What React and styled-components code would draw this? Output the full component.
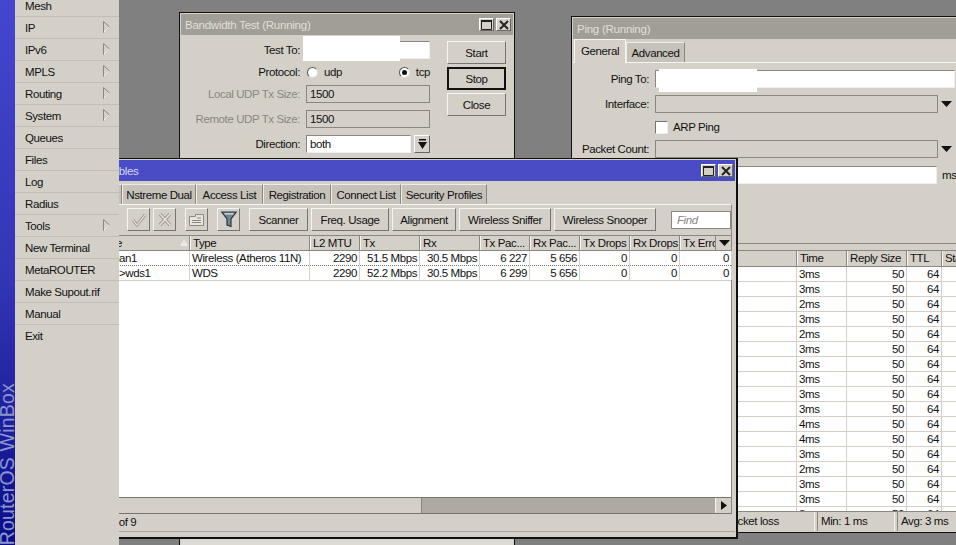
import React from 'react';
import styled, { createGlobalStyle } from 'styled-components';

const MENU = [
  ['Mesh'], ['IP', 1], ['IPv6', 1], ['MPLS', 1], ['Routing', 1], ['System', 1], ['Queues'], ['Files'], ['Log'], ['Radius'],
  ['Tools', 1], ['New Terminal'], ['MetaROUTER'], ['Make Supout.rif'], ['Manual'], ['Exit'],
];
const TIMES = ['3ms', '3ms', '2ms', '3ms', '2ms', '3ms', '3ms', '3ms', '3ms', '3ms', '4ms', '4ms', '3ms', '2ms', '3ms', '3ms', '3ms'];
const WIRELESS_COLS = '127px 120px 50px 60px 60px 50px 50px 50px 50px 36px 16px';
const WIRELESS_ROW_COLS = '127px 120px 50px 60px 60px 50px 50px 50px 50px 52px';
const PING_COLS = '224px 50px 60px 35px 1fr';

const CheckIcon = () => (
  <svg width="16" height="14" viewBox="0 0 16 14" fill="none" strokeLinejoin="miter">
    <path d="M2 7l4 5 8-10" stroke="#a09c94" strokeWidth="3" />
    <path d="M2 7l4 5 8-10" stroke="#e6e3dc" strokeWidth="1.2" />
  </svg>
);
const CrossIcon = () => (
  <svg width="14" height="15" viewBox="0 0 14 15" fill="none">
    <path d="M2 2l10 11M12 2L2 13" stroke="#a09c94" strokeWidth="3.4" />
    <path d="M2 2l10 11M12 2L2 13" stroke="#e6e3dc" strokeWidth="1.4" />
  </svg>
);
const NoteIcon = () => (
  <svg width="15" height="12" viewBox="0 0 15 12" fill="#e8e5de" stroke="#8c8880">
    <path d="M.5 4V2.500h6v-2h8v11H.5z" />
    <path d="M8 4h4M3 6.500h9M3 8.500h9" />
  </svg>
);
const FilterIcon = () => (
  <svg width="16" height="17" viewBox="0 0 16 17">
    <path d="M.8 1h14.400L10 8v7.500L6 14V8z" fill="#6d8794" stroke="#2a363e" strokeWidth="1.2" />
    <path d="M3.500 2.800h9" stroke="#cfdae0" strokeWidth="1.400" />
  </svg>
);
const MaxIcon = () => (
  <svg width="11" height="10" viewBox="0 0 11 10" fill="none" stroke="#222">
    <path d="M.5 1h10v8.500H.5z" />
    <path d="M0 1h11" strokeWidth="2" />
  </svg>
);
const CloseIcon = () => (
  <svg width="10" height="10" viewBox="0 0 10 10" fill="none" stroke="#222" strokeWidth="2">
    <path d="M1 1l8 8M9 1L1 9" />
  </svg>
);
const DownArrow = () => (
  <svg width="11" height="6" viewBox="0 0 11 6" fill="#111">
    <path d="M0 0h11L5.500 6z" />
  </svg>
);
const StopDownArrow = () => (
  <svg width="9" height="10" viewBox="0 0 9 10" fill="#111">
    <path d="M1 0h7v1.500H1zM0 3h9L4.500 10z" />
  </svg>
);
const RightArrow = () => (
  <svg width="6" height="9" viewBox="0 0 6 9" fill="#111">
    <path d="M0 0l6 4.500L0 9z" />
  </svg>
);
const Chevron = () => (
  <ChevronSvg width="7" height="12" viewBox="0 0 7 12" fill="#d4d0c8">
    <path d="M.5.500v11L6.500 6z" stroke="#8a8780" />
    <path d="M1 11l5.500-5" stroke="#fff" fill="none" />
  </ChevronSvg>
);

const WindowButtons = () => (
  <TitleButtons>
    <TitleButton><MaxIcon /></TitleButton>
    <TitleButton><CloseIcon /></TitleButton>
  </TitleButtons>
);

const App = () => (
  <Page>
    <GlobalStyle />
    <Strip>
      <StripText>RouterOS WinBox</StripText>
    </Strip>
    <Menu>
      {MENU.map(([name, sub]) => (
        <MenuItem key={name}>
          {name}
          {sub && <Chevron />}
        </MenuItem>
      ))}
    </Menu>

    <Desktop>
      <Window $x={60} $y={12} $w={336} $h={560}>
        <Title>
          Bandwidth Test (Running)
          <WindowButtons />
        </Title>
        <TestBody>
          <TestForm>
            <FormRow $label={119} $top={0}>
              <Label>Test To:</Label>
              <Field $w={124} $white />
              <Redaction $left={122} $top={-5} $w={97} $h={25} />
            </FormRow>
            <FormRow $label={119} $top={4}>
              <Label>Protocol:</Label>
              <RadioGroup>
                <RadioItem><Radio />udp</RadioItem>
                <RadioItem><Radio $on />tcp</RadioItem>
              </RadioGroup>
            </FormRow>
            <FormRow $label={119} $top={4}>
              <Label $off>Local UDP Tx Size:</Label>
              <Field $w={124}>1500</Field>
            </FormRow>
            <FormRow $label={119} $top={7}>
              <Label $off>Remote UDP Tx Size:</Label>
              <Field $w={124}>1500</Field>
            </FormRow>
            <FormRow $label={119} $top={7}>
              <Label>Direction:</Label>
              <Field $w={105} $white>both</Field>
              <SmallButton><StopDownArrow /></SmallButton>
            </FormRow>
          </TestForm>
          <SideButtons>
            <Button $w={59} $h={23}>Start</Button>
            <Button $w={59} $h={23} $focus>Stop</Button>
            <Button $w={59} $h={23}>Close</Button>
          </SideButtons>
        </TestBody>
        <BottomField />
      </Window>

      <Window $x={452} $y={16} $w={420} $h={517}>
        <Title>Ping (Running)</Title>
        <PingTabs>
          <ActiveTab>General</ActiveTab>
          <Tab $w={59} $h={20}>Advanced</Tab>
        </PingTabs>
        <PingPanel>
          <FormRow $label={70} $top={0}>
            <Label>Ping To:</Label>
            <Field $w={300} $white />
            <Redaction $left={80} $top={-1} $w={98} $h={23} />
          </FormRow>
          <FormRow $label={70} $top={7}>
            <Label>Interface:</Label>
            <Field $w={283} />
            <ArrowSlot><DownArrow /></ArrowSlot>
          </FormRow>
          <FormRow $label={70} $top={5}>
            <Label />
            <CheckBox />
            <CheckText>ARP Ping</CheckText>
          </FormRow>
          <FormRow $label={70} $top={4}>
            <Label>Packet Count:</Label>
            <Field $w={283} />
            <ArrowSlot><DownArrow /></ArrowSlot>
          </FormRow>
          <FormRow $label={70} $top={8}>
            <Label>Timeout:</Label>
            <Field $w={282} $white />
            <Unit>ms</Unit>
          </FormRow>
        </PingPanel>
        <PingTable>
          <HeadRow $cols={PING_COLS} $h={17}>
            <HeadCell>Host</HeadCell>
            <HeadCell>Time</HeadCell>
            <HeadCell>Reply Size</HeadCell>
            <HeadCell>TTL</HeadCell>
            <HeadCell>Status</HeadCell>
          </HeadRow>
          <PingRows>
            {TIMES.map((time, i) => (
              <PingRow key={i} $cols={PING_COLS}>
                <Cell />
                <Cell>{time}</Cell>
                <Cell $right>50</Cell>
                <Cell $right>64</Cell>
                <Cell />
              </PingRow>
            ))}
          </PingRows>
        </PingTable>
        <PingStatus>
          <StatusCell $w={128}>20 items</StatusCell>
          <StatusCell $w={112}>0% packet loss</StatusCell>
          <StatusCell $w={78}>Min: 1 ms</StatusCell>
          <StatusCell $w={94}>Avg: 3 ms</StatusCell>
        </PingStatus>
      </Window>

      <Window $x={-59} $y={158} $w={678} $h={381} $front>
        <Title $active>
          Wireless Tables
          <WindowButtons />
        </Title>
        <WirelessTabs>
          <Tab $w={60} $h={20}>Interfaces</Tab>
          <Tab $w={74} $h={20}>Nstreme Dual</Tab>
          <Tab $w={67} $h={20}>Access List</Tab>
          <Tab $w={68} $h={20}>Registration</Tab>
          <Tab $w={70} $h={20}>Connect List</Tab>
          <Tab $w={86} $h={20}>Security Profiles</Tab>
        </WirelessTabs>
        <Panel>
          <Toolbar>
            <ToolGroup>
              <IconButton>+</IconButton>
              <IconButton>−</IconButton>
            </ToolGroup>
            <ToolGroup>
              <IconButton><CheckIcon /></IconButton>
              <IconButton><CrossIcon /></IconButton>
            </ToolGroup>
            <IconButton><NoteIcon /></IconButton>
            <IconButton><FilterIcon /></IconButton>
            <ToolGroup>
              <Button $w={59} $h={23}>Scanner</Button>
              <Button $w={78} $h={23}>Freq. Usage</Button>
              <Button $w={64} $h={23}>Alignment</Button>
              <Button $w={92} $h={23}>Wireless Sniffer</Button>
              <Button $w={102} $h={23}>Wireless Snooper</Button>
            </ToolGroup>
            <Find>Find</Find>
          </Toolbar>
          <WirelessTable>
            <HeadRow $cols={WIRELESS_COLS} $h={16}>
              <HeadCell $name>Name<SortMark /></HeadCell>
              <HeadCell>Type</HeadCell>
              <HeadCell>L2 MTU</HeadCell>
              <HeadCell>Tx</HeadCell>
              <HeadCell>Rx</HeadCell>
              <HeadCell>Tx Pac...</HeadCell>
              <HeadCell>Rx Pac...</HeadCell>
              <HeadCell>Tx Drops</HeadCell>
              <HeadCell>Rx Drops</HeadCell>
              <HeadCell>Tx Errors</HeadCell>
              <HeadArrow><DownArrow /></HeadArrow>
            </HeadRow>
            <WirelessRows>
              <WirelessRow $cols={WIRELESS_ROW_COLS}>
                <Cell $indent={46}>wlan1</Cell>
                <Cell>Wireless (Atheros 11N)</Cell>
                <Cell $right>2290</Cell>
                <Cell $right>51.5 Mbps</Cell>
                <Cell $right>30.5 Mbps</Cell>
                <Cell $right>6 227</Cell>
                <Cell $right>5 656</Cell>
                <Cell $right>0</Cell>
                <Cell $right>0</Cell>
                <Cell $right>0</Cell>
              </WirelessRow>
              <WirelessRow $cols={WIRELESS_ROW_COLS}>
                <Cell $indent={56}>&gt;wds1</Cell>
                <Cell>WDS</Cell>
                <Cell $right>2290</Cell>
                <Cell $right>52.2 Mbps</Cell>
                <Cell $right>30.5 Mbps</Cell>
                <Cell $right>6 299</Cell>
                <Cell $right>5 656</Cell>
                <Cell $right>0</Cell>
                <Cell $right>0</Cell>
                <Cell $right>0</Cell>
              </WirelessRow>
            </WirelessRows>
            <Scrollbar>
              <ScrollThumb />
              <ScrollTrack />
              <ScrollEnd><RightArrow /></ScrollEnd>
            </Scrollbar>
          </WirelessTable>
        </Panel>
        <WirelessStatus>2 items out of 9</WirelessStatus>
      </Window>
    </Desktop>
  </Page>
);

export default App;

const GlobalStyle = createGlobalStyle`
  html, body {
    margin: 0;
    padding: 0;
    background: #808080;
  }
  * {
    box-sizing: border-box;
  }
`;
const Page = styled.div`
  width: 956px;
  height: 545px;
  display: flex;
  overflow: hidden;
  font-family: "Liberation Sans", Arial, sans-serif;
  font-size: 11.5px;
  letter-spacing: -0.4px;
  color: #111;
`;
const Strip = styled.div`
  width: 15px;
  flex: none;
  display: flex;
  align-items: flex-end;
  overflow: hidden;
  background: linear-gradient(180deg, #4446cc 0%, #3436b8 50%, #0a0c88 100%);
`;
const StripText = styled.div`
  writing-mode: vertical-rl;
  transform: rotate(180deg);
  font-size: 19.5px;
  line-height: 15px;
  letter-spacing: 0.2px;
  white-space: nowrap;
  color: #8d96cf;
`;
const Menu = styled.div`
  width: 104px;
  flex: none;
  margin-top: -5px;
  background: #d4d0c8;
`;
const MenuItem = styled.div`
  height: 22px;
  display: flex;
  align-items: center;
  justify-content: space-between;
  padding: 0 9px 0 10px;
  border-bottom: 1px solid #c2beb6;

  &:nth-child(n + 16) {
    border-bottom: 0;
  }
`;
const ChevronSvg = styled.svg`
  margin-top: -2px;
`;
const Desktop = styled.div`
  position: relative;
  flex: 1;
  height: 545px;
  overflow: hidden;
  background: #808080;
`;
const Window = styled.div`
  position: absolute;
  left: ${(p) => p.$x}px;
  top: ${(p) => p.$y}px;
  width: ${(p) => p.$w}px;
  height: ${(p) => p.$h}px;
  display: flex;
  flex-direction: column;
  padding: 1px;
  background: #d4d0c8;
  border: 1px solid #111;
  border-right-width: ${(p) => (p.$front ? 2 : 1)}px;
  border-bottom-width: ${(p) => (p.$front ? 2 : 1)}px;
`;
const Title = styled.div`
  height: 21px;
  flex: none;
  display: flex;
  align-items: center;
  justify-content: space-between;
  padding: 0 2px 0 ${(p) => (p.$active ? 2 : 4)}px;
  letter-spacing: ${(p) => (p.$active ? -0.4 : -0.25)}px;
  background: ${(p) => (p.$active ? '#4a4cc6' : '#a19e96')};
  color: ${(p) => (p.$active ? '#d6d6ee' : '#e2dfd8')};
`;
const TitleButtons = styled.div`
  display: flex;
  gap: 2px;
`;
const TitleButton = styled.div`
  width: 15px;
  height: 13px;
  display: flex;
  align-items: center;
  justify-content: center;
  background: #d4d0c8;
  border: 1px solid;
  border-color: #fff #666 #666 #fff;
`;
const TestBody = styled.div`
  display: flex;
  padding-top: 6px;
`;
const TestForm = styled.div`
  width: 249px;
  flex: none;
`;
const FormRow = styled.div`
  position: relative;
  height: 18px;
  margin-top: ${(p) => p.$top}px;
  display: flex;
  align-items: center;

  & > :first-child {
    width: ${(p) => p.$label}px;
    flex: none;
    margin-right: 6px;
  }
`;
const Label = styled.div`
  text-align: right;
  white-space: nowrap;
  color: ${(p) => (p.$off ? '#8a8780' : '#111')};
`;
const Field = styled.div`
  width: ${(p) => p.$w}px;
  height: 18px;
  flex: none;
  padding: 2px 3px;
  line-height: 13px;
  background: ${(p) => (p.$white ? '#fff' : '#d4d0c8')};
  border: 1px solid #8a8780;
  border-color: #8a8780 #eee #eee #8a8780;
  ${(p) => !p.$white && 'border-color: #8a8780;'}
`;
const Redaction = styled.div`
  position: absolute;
  left: ${(p) => p.$left}px;
  top: ${(p) => p.$top}px;
  width: ${(p) => p.$w}px;
  height: ${(p) => p.$h}px;
  background: #fff;
`;
const RadioGroup = styled.div`
  width: 124px;
  display: flex;
  justify-content: space-between;
`;
const RadioItem = styled.div`
  display: flex;
  align-items: center;
  gap: 6px;
  padding-left: 1px;
`;
const Radio = styled.span`
  width: 11px;
  height: 11px;
  display: flex;
  align-items: center;
  justify-content: center;
  border-radius: 50%;
  background: #fff;
  border: 1px solid;
  border-color: #555 #ddd #ddd #555;

  &::after {
    content: '';
    width: 5px;
    height: 5px;
    border-radius: 50%;
    background: ${(p) => (p.$on ? '#111' : 'transparent')};
  }
`;
const SmallButton = styled.div`
  width: 16px;
  height: 18px;
  margin-left: 3px;
  display: flex;
  align-items: center;
  justify-content: center;
  border: 1px solid;
  border-color: #fff #666 #666 #fff;
`;
const SideButtons = styled.div`
  margin-left: 17px;
  display: flex;
  flex-direction: column;
  gap: 3px;
`;
const Button = styled.div`
  width: ${(p) => p.$w}px;
  height: ${(p) => p.$h}px;
  flex: none;
  display: flex;
  align-items: center;
  justify-content: center;
  white-space: nowrap;
  background: #d4d0c8;
  border: 1px solid;
  border-color: ${(p) => (p.$focus ? '#111' : '#f6f5f1 #77746e #77746e #f6f5f1')};
  ${(p) => p.$focus && 'border-width: 2px;'}
`;
const BottomField = styled.div`
  margin-top: auto;
  height: 32px;
  background: #dedbd4;
`;
const PingTabs = styled.div`
  height: 24px;
  flex: none;
  display: flex;
  align-items: flex-end;
  padding-left: 1px;
  border-bottom: 1px solid #f6f5f1;
`;
const ActiveTab = styled.div`
  width: 52px;
  height: 24px;
  margin-bottom: -1px;
  padding-top: 5px;
  text-align: center;
  background: #d4d0c8;
  border: 1px solid #f6f5f1;
  border-bottom: 0;
`;
const Tab = styled.div`
  width: ${(p) => p.$w}px;
  height: ${(p) => p.$h}px;
  flex: none;
  display: flex;
  align-items: center;
  justify-content: center;
  white-space: nowrap;
  background: #c6c2ba;
  border-top: 1px solid #eeece6;
  border-left: 1px solid #eeece6;
  border-right: 1px solid #8a8780;
`;
const PingPanel = styled.div`
  height: 181px;
  flex: none;
  padding-top: 7px;
  padding-left: 6px;
  border-bottom: 1px solid #8a8780;
`;
const ArrowSlot = styled.div`
  margin-left: 3px;
  display: flex;
`;
const CheckBox = styled.div`
  width: 13px;
  height: 13px;
  background: #fff;
  border: 1px solid;
  border-color: #77746e #eee #eee #77746e;
`;
const CheckText = styled.div`
  margin-left: 5px;
`;
const Unit = styled.div`
  margin-left: 5px;
`;
const PingTable = styled.div`
  flex: 1;
  min-height: 0;
  margin-top: 6px;
  display: flex;
  flex-direction: column;
  overflow: hidden;
  background: #fff;
`;
const HeadRow = styled.div`
  height: ${(p) => p.$h}px;
  flex: none;
  display: grid;
  grid-template-columns: ${(p) => p.$cols};
  background: #d4d0c8;
  border-top: 1px solid #8a8780;
  border-bottom: 1px solid #8a8780;
`;
const HeadCell = styled.div`
  position: relative;
  min-width: 0;
  overflow: hidden;
  white-space: nowrap;
  padding: 1px 2px 0;
  line-height: 13px;
  border-left: 1px solid #f6f5f1;
  border-right: 1px solid #8a8780;
  ${(p) => p.$name && 'padding-left: 29px;'}
`;
const HeadArrow = styled.div`
  display: flex;
  align-items: center;
  justify-content: center;
`;
const SortMark = styled.span`
  position: absolute;
  right: 1px;
  top: 3px;
  width: 0;
  height: 0;
  border-left: 4px solid transparent;
  border-right: 4px solid transparent;
  border-bottom: 7px solid #ece9e2;
`;
const PingRows = styled.div`
  flex: 1;
  min-height: 0;
  overflow: hidden;
`;
const PingRow = styled.div`
  height: 15px;
  display: grid;
  grid-template-columns: ${(p) => p.$cols};
  border-bottom: 1px solid #d4d0c8;

  & > div {
    padding-top: 1px;
    line-height: 13px;
  }
`;
const Cell = styled.div`
  min-width: 0;
  padding: 0 2px;
  line-height: 14px;
  white-space: nowrap;
  border-right: 1px solid #d4d0c8;
  text-align: ${(p) => (p.$right ? 'right' : 'left')};
  ${(p) => p.$indent && `padding-left: ${p.$indent}px;`}
`;
const PingStatus = styled.div`
  height: 20px;
  flex: none;
  display: flex;
  gap: 2px;
  border-top: 1px solid #8a8780;
`;
const StatusCell = styled.div`
  width: ${(p) => p.$w}px;
  flex: none;
  padding: 3px 3px 0;
  white-space: nowrap;
  border-left: 1px solid #8a8780;
  border-right: 1px solid #f6f5f1;
`;
const WirelessTabs = styled.div`
  height: 23px;
  flex: none;
  display: flex;
  align-items: flex-end;
`;
const Panel = styled.div`
  height: 310px;
  flex: none;
  display: flex;
  flex-direction: column;
  margin-right: 3px;
  padding: 3px 0 0 1px;
  border-top: 1px solid #f6f5f1;
  border-right: 1px solid #8a8780;
`;
const Toolbar = styled.div`
  height: 23px;
  flex: none;
  display: flex;
  align-items: center;
  gap: 9px;
  padding: 0 0 0 6px;
`;
const ToolGroup = styled.div`
  display: flex;
  gap: 3px;
`;
const IconButton = styled.div`
  width: 23px;
  height: 23px;
  flex: none;
  display: flex;
  align-items: center;
  justify-content: center;
  border: 1px solid;
  border-color: #f6f5f1 #77746e #77746e #f6f5f1;
`;
const Find = styled.div`
  width: 60px;
  height: 18px;
  margin-left: auto;
  padding: 2px 5px;
  line-height: 13px;
  font-style: italic;
  color: #8a8780;
  background: #fff;
  border: 1px solid #8a8780;
`;
const WirelessTable = styled.div`
  flex: 1;
  min-height: 0;
  margin-top: 4px;
  display: flex;
  flex-direction: column;
`;
const WirelessRows = styled.div`
  flex: 1;
  min-height: 0;
  background: #fff;
`;
const WirelessRow = styled.div`
  height: 15px;
  display: grid;
  grid-template-columns: ${(p) => p.$cols};
  border-bottom: 1px dotted #77746e;

  &:last-child {
    border-bottom: 1px solid #d4d0c8;
  }
`;
const Scrollbar = styled.div`
  height: 17px;
  flex: none;
  display: flex;
  border-top: 1px solid #77746e;
  border-bottom: 1px solid #77746e;
`;
const ScrollThumb = styled.div`
  width: 359px;
  border-right: 1px solid #8a8780;
`;
const ScrollTrack = styled.div`
  flex: 1;
  background: #aeaaa2;
`;
const ScrollEnd = styled.div`
  width: 16px;
  display: flex;
  align-items: center;
  justify-content: center;
  border-left: 1px solid #f6f5f1;
`;
const WirelessStatus = styled.div`
  flex: 1;
  margin-bottom: 4px;
  padding: 2px 0 0 2px;
  white-space: nowrap;
  border-bottom: 1px solid #a8a49c;
`;
